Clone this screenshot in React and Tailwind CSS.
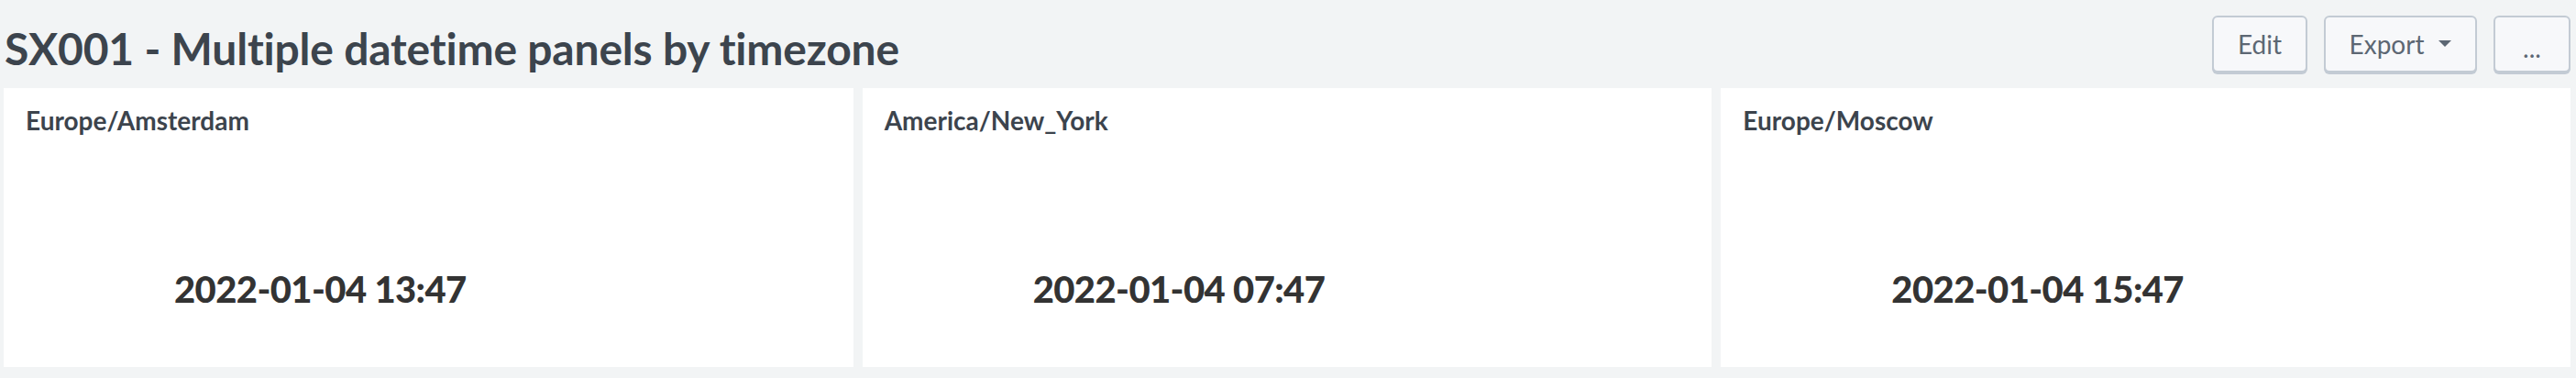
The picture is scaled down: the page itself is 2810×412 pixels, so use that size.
const panels = [
  { tz: 'Europe/Amsterdam', time: '2022-01-04 13:47' },
  { tz: 'America/New_York', time: '2022-01-04 07:47' },
  { tz: 'Europe/Moscow', time: '2022-01-04 15:47' },
];

const font = { fontFamily: 'Lato, "Open Sans", sans-serif' };

function Button({ children, className = '' }) {
  return (
    <button
      className={`h-[62px] flex items-center justify-center rounded-[6px] border-2 border-[#c3cbd4] bg-[#f7f8fa]
        shadow-[0_2px_0_#c3cbd4] text-[28px] leading-[28px] text-[#5c6773] ${className}`}
    >
      {children}
    </button>
  );
}

function Panel({ tz, time }) {
  return (
    <div className="bg-white flex flex-col pl-6 pt-[21px]">
      <div className="text-[28px] leading-[28px] font-bold text-[#3c444d]">{tz}</div>
      <div className="mt-[150px] ml-[162px] text-[40px] leading-[40px] tracking-[-0.6px] font-black text-[#333333]">
        {time}
      </div>
    </div>
  );
}

export default function App() {
  return (
    <div className="h-[412px] bg-[#f2f4f5] pl-1 pr-[6px] pb-3 flex flex-col" style={font}>
      {/* Header */}
      <div className="h-[96px] shrink-0 flex justify-between">
        <h1 className="pt-[29px] pl-[1px] text-[48px] leading-[48px] tracking-[-0.2px] font-bold text-[#3c444d]">
          SX001 - Multiple datetime panels by timezone
        </h1>
        <div className="flex gap-[18px] pt-[17px]">
          <Button className="w-[104px]">Edit</Button>
          <Button className="w-[167px] gap-4">
            Export
            <svg width="14" height="8" viewBox="0 0 14 8">
              <path d="M0 0h14L7 7z" fill="#5c6773" />
            </svg>
          </Button>
          <Button className="w-[84px] pt-[8px]">...</Button>
        </div>
      </div>

      {/* Panels */}
      <div className="flex-1 grid grid-cols-3 gap-[10px]">
        {panels.map((p) => (
          <Panel key={p.tz} {...p} />
        ))}
      </div>
    </div>
  );
}
